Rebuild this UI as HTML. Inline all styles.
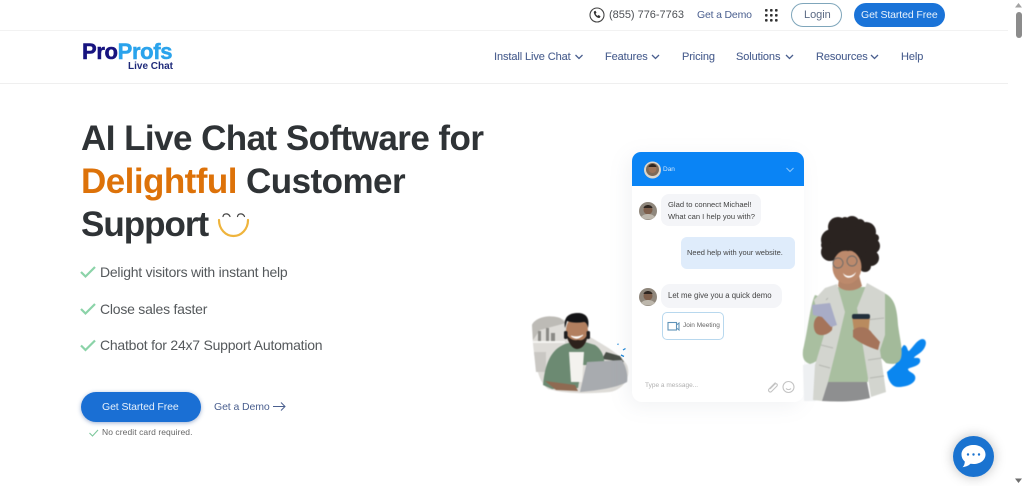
<!DOCTYPE html>
<html><head><meta charset="utf-8"><style>
html,body{margin:0;padding:0;background:#fff;overflow:hidden}
body{width:1024px;height:486px;position:relative;font-family:"Liberation Sans",sans-serif}
.t{position:absolute;white-space:nowrap;line-height:1}
svg{position:absolute}
.n{color:#4a5f8f;font-size:11px;top:51.500px;letter-spacing:-.1px;-webkit-text-stroke:.1px #4a5f8f}
h1{position:absolute;margin:0;left:81px;white-space:nowrap;font-size:35px;font-weight:700;color:#2f3336;line-height:1;letter-spacing:-.55px}
.li{color:#55595c;font-size:14px;letter-spacing:-.23px}
</style></head><body>
<div style="position:absolute;left:0;top:30px;width:1008px;height:1px;background:#f2f2f2"></div>
<div style="position:absolute;left:0;top:83px;width:1008px;height:1px;background:#efefef"></div>

<!-- top bar -->
<svg style="left:589px;top:7px" width="16" height="16" viewBox="0 0 16 16"><circle cx="8" cy="8" r="7" fill="none" stroke="#444" stroke-width="1.100"/><path d="M5.200 4.200l1.300-.4 1 2-.9.8c.4 1 1.100 1.800 2.100 2.300l.9-.9 1.900 1.200-.5 1.300c-.3.5-1 .6-1.600.4C7.200 10.200 5.600 8.500 4.900 6c-.2-.7-.1-1.400.3-1.800z" fill="#333"/></svg>
<div class="t" style="left:609px;top:10px;font-size:11px;color:#4d5055;letter-spacing:-.02px">(855) 776-7763</div>
<div class="t" style="left:697px;top:10px;font-size:10.500px;color:#4a5f8f;letter-spacing:-.18px">Get a Demo</div>
<svg style="left:765px;top:9px" width="13" height="13" viewBox="0 0 13 13" fill="#333"><rect x="0" y="0" width="2.600" height="2.600" rx=".8"/><rect x="5" y="0" width="2.600" height="2.600" rx=".8"/><rect x="10" y="0" width="2.600" height="2.600" rx=".8"/><rect x="0" y="5" width="2.600" height="2.600" rx=".8"/><rect x="5" y="5" width="2.600" height="2.600" rx=".8"/><rect x="10" y="5" width="2.600" height="2.600" rx=".8"/><rect x="0" y="10" width="2.600" height="2.600" rx=".8"/><rect x="5" y="10" width="2.600" height="2.600" rx=".8"/><rect x="10" y="10" width="2.600" height="2.600" rx=".8"/></svg>
<div style="position:absolute;left:791px;top:3px;width:49px;height:22px;border:1px solid #7fa6bb;border-radius:12px"></div>
<div class="t" style="left:804px;top:10px;font-size:11px;color:#5c6b85;letter-spacing:-.05px">Login</div>
<div style="position:absolute;left:854px;top:3px;width:91px;height:24px;background:#1a73d8;border-radius:12px"></div>
<div class="t" style="left:861px;top:10px;font-size:10.500px;color:#e8f2fc;letter-spacing:-.1px">Get Started Free</div>

<!-- scrollbar -->
<div style="position:absolute;left:1008px;top:0;width:16px;height:486px;background:#fff"></div>
<svg style="left:1008px;top:0" width="16" height="486"><path d="M10.500 3l3.500 4.500H7z" fill="#a3a3a3"/><rect x="8" y="12" width="6" height="26" rx="3" fill="#8c8c8c"/><path d="M10.500 483l3.500-4.500H7z" fill="#6e6e6e"/></svg>

<!-- logo -->
<div class="t" style="left:82px;top:40.500px;font-size:22px;font-weight:700;letter-spacing:-.35px;color:#17137f;-webkit-text-stroke:.5px #17137f">Pro<span style="color:#2aa3ec;-webkit-text-stroke:.5px #2aa3ec">Profs</span></div>
<div class="t" style="left:128px;top:61.500px;font-size:10px;font-weight:700;color:#1f2a7a">Live Chat</div>

<!-- nav -->
<div class="t n" style="left:494px">Install Live Chat</div>
<div class="t n" style="left:605px">Features</div>
<div class="t n" style="left:682px">Pricing</div>
<div class="t n" style="left:736px">Solutions</div>
<div class="t n" style="left:816px">Resources</div>
<div class="t n" style="left:901px">Help</div>
<svg style="left:0;top:0" width="1008" height="84" fill="none" stroke="#4a5f8f" stroke-width="1.300"><path d="M575.500 55l3.500 3.500 3.500-3.500M652 55l3.500 3.500 3.500-3.500M786 55l3.500 3.500 3.500-3.500M871 55l3.500 3.500 3.500-3.500"/></svg>

<!-- hero -->
<h1 style="top:121px">AI Live Chat Software for</h1>
<h1 style="top:164px"><span style="color:#dd7209">Delightful</span> Customer</h1>
<h1 style="top:207px;letter-spacing:-1px">Support</h1>
<svg style="left:217px;top:210px" width="34" height="30" viewBox="0 0 34 30" fill="none" stroke="#efb43c" stroke-width="2.200" stroke-linecap="round"><path d="M2 10c0 9 6.500 16 14.500 16S31 19 31 10"/><path d="M6 6.500c.7-3.500 5.500-3.500 7 0M20.500 6.500c.7-3.500 5.500-3.500 7 0" stroke="#444" stroke-width="1.200"/></svg>

<svg style="left:0;top:0" width="110" height="360" fill="none" stroke="#8bd3a8" stroke-width="2.200"><path d="M81 272l4.500 4.500L95 267M81 309l4.500 4.500L95 304M81 345.500l4.500 4.500L95 340.500"/></svg>
<div class="t li" style="left:100px;top:265px">Delight visitors with instant help</div>
<div class="t li" style="left:100px;top:301.500px">Close sales faster</div>
<div class="t li" style="left:100px;top:338px">Chatbot for 24x7 Support Automation</div>

<div style="position:absolute;left:81px;top:392px;width:120px;height:30px;background:#1a6fd4;border-radius:15px;box-shadow:0 1px 4px rgba(40,80,150,.45)"></div>
<div class="t" style="left:102px;top:402px;font-size:10.500px;color:#e6f0fb;letter-spacing:-.1px">Get Started Free</div>
<div class="t" style="left:214px;top:401.500px;font-size:10.500px;color:#4a5f8f;letter-spacing:-.1px">Get a Demo</div>
<svg style="left:273px;top:401px" width="13" height="11" fill="none" stroke="#4a5f8f" stroke-width="1"><path d="M0 5.500h12M8 1.500l4 4-4 4"/></svg>
<svg style="left:89px;top:429px" width="10" height="8" fill="none" stroke="#7cc79b" stroke-width="1.100"><path d="M.5 4l3 3L9 1"/></svg>
<div class="t" style="left:102px;top:428px;font-size:8.500px;color:#666;letter-spacing:.07px">No credit card required.</div>

<!-- man -->
<svg style="left:0;top:0;filter:blur(.5px)" width="1024" height="486">
<path d="M532 325C535 318 548 314 560 318C570 322 580 330 590 337C600 343 620 353 627 365C632 378 622 390 610 392C590 394 565 394 548 389C538 382 533 360 532 325Z" fill="#dedcd8"/>
<path d="M532 325C535 318 548 314 560 318L566 323 540 330 533 340Z" fill="#bdbbb6"/>
<rect x="533" y="341" width="32" height="2" fill="#f5f4f1"/>
<path d="M538 331h3v10h-3zM546 328h3v13h-3zM551 333h4v8h-4z" fill="#8b8a86"/>
<path d="M534 352h12v20h-10z" fill="#c9c7c3"/>
<path d="M606 352l14 4 4 6-22-3z" fill="#4a5048"/>
<path d="M543 385C545 365 550 350 565 344L572 342H585L595 345C603 350 605 360 604 365L582 365L578 388L552 389Z" fill="#6c8a72"/>
<path d="M569 352L584 352L582 382H571Z" fill="#f3f2ee"/>
<path d="M587 362L622 360C627 368 628 378 627 382C615 388 600 390 580 392Z" fill="#a8abaf"/>
<path d="M545 381L575 385L578 391L556 390Z" fill="#8f6a52"/>
<ellipse cx="577" cy="331" rx="11" ry="15" fill="#b27f5f"/>
<path d="M565 328C563 316 570 313 578 313C586 313 590 318 588 328C587 324 586 322 584 322C578 323 572 323 567 321Z" fill="#141416"/>
<path d="M566 334C568 342 572 349 577 349C583 349 587 342 588 334C585 338 584 341 578 340C572 341 569 338 566 334Z" fill="#2d221c"/>
<path d="M571 336Q577 341 583 335Q578 338 571 336Z" fill="#fff" stroke="#fff" stroke-width=".8"/>
<rect x="564" y="331" width="3.500" height="8" rx="1.500" fill="#1d1d1f"/><rect x="586.500" y="331" width="3.500" height="8" rx="1.500" fill="#1d1d1f"/>
</svg>
<svg style="left:0;top:0" width="1024" height="486"><path d="M617.500 344l1 .5M623 350l2.500-1.500M621 355l3 1.500" stroke="#1c86d8" stroke-width="1.300" fill="none"/></svg>

<!-- chat card -->
<div style="position:absolute;left:632px;top:152px;width:172px;height:250px;background:#fff;border-radius:10px;box-shadow:-4px 4px 20px rgba(120,130,150,.10)"></div>
<div style="position:absolute;left:632px;top:152px;width:172px;height:34px;background:#0a84f5;border-radius:9px 9px 0 0"></div>
<svg style="left:640px;top:158px" width="170" height="22"><circle cx="12.500" cy="12" r="8.500" fill="#dcd6cb"/><circle cx="12.500" cy="11.500" r="6.500" fill="#7d6a58"/><circle cx="12.500" cy="11" r="4" fill="#9b7358"/><path d="M8.500 9c1-4 7-4 8 0z" fill="#2f2620"/><path d="M146.500 10l3.500 3.500 3.500-3.500" fill="none" stroke="#8cc6fb" stroke-width="1"/></svg>
<div class="t" style="left:663px;top:167px;font-size:6.500px;color:#cfe6fc">Dan</div>

<div style="position:absolute;left:661px;top:194px;width:100px;height:32px;background:#f4f5f8;border-radius:8px"></div>
<div class="t" style="left:668px;top:200.500px;font-size:7.600px;color:#444">Glad to connect Michael!</div>
<div class="t" style="left:668px;top:212.500px;font-size:7.600px;color:#444">What can I help you with?</div>
<svg style="left:638px;top:201px" width="20" height="20"><circle cx="10" cy="10" r="9" fill="#8f877c"/><circle cx="10" cy="9" r="4.500" fill="#7e5f4b"/><path d="M5.500 7c1-4 8-4 9 0z" fill="#2f2620"/><path d="M3 16c3-4 11-4 14 0-3 3-11 3-14 0z" fill="#bdb7ac"/></svg>

<div style="position:absolute;left:681px;top:237px;width:114px;height:32px;background:#dfecfb;border-radius:6px"></div>
<div class="t" style="left:687px;top:249px;font-size:7.500px;color:#444">Need help with your website.</div>

<div style="position:absolute;left:661px;top:284px;width:121px;height:24px;background:#f4f5f8;border-radius:9px"></div>
<div class="t" style="left:668px;top:291.500px;font-size:7.800px;color:#444">Let me give you a quick demo</div>
<svg style="left:638px;top:287px" width="20" height="20"><circle cx="10" cy="10" r="9" fill="#8f877c"/><circle cx="10" cy="9" r="4.500" fill="#7e5f4b"/><path d="M5.500 7c1-4 8-4 9 0z" fill="#2f2620"/><path d="M3 16c3-4 11-4 14 0-3 3-11 3-14 0z" fill="#bdb7ac"/></svg>

<div style="position:absolute;left:662px;top:312px;width:60px;height:26px;border:1px solid #b8d8ee;border-radius:5px"></div>
<svg style="left:667px;top:321px" width="14" height="11" fill="none" stroke="#5f93b8" stroke-width="1.100"><rect x="1" y="1.500" width="8.500" height="7.500"/><path d="M9.500 4l2.500-2v7l-2.500-2"/></svg>
<div class="t" style="left:683px;top:322.500px;font-size:6.500px;color:#666">Join Meeting</div>

<div class="t" style="left:645px;top:383px;font-size:6.500px;color:#b0b0b0">Type a message...</div>
<svg style="left:766px;top:380px" width="30" height="14" fill="none" stroke="#c4c4c4" stroke-width="1.100"><path d="M9.500 2.500L3 9c-1.500 2 1 4 2.500 2.500L11 6c1-1.500-.5-3-2-2L4 9"/><circle cx="22.500" cy="7" r="5.500"/><path d="M20 8.500c1.500 1.500 3.500 1.500 5 0"/></svg>

<!-- woman -->
<svg style="left:0;top:0;filter:blur(.5px)" width="1024" height="486">
<path d="M887 372L895 365C899 360 900 348 904 345C908 346 907 351 909 351C913 347 917 340 922 339C927 339 927 345 923 350C920 354 914 356 914 358C917 358 921 357 920 362C918 367 910 367 908 369C908 372 913 372 915 376C917 382 909 387 898 387C892 387 888 381 887 372Z" fill="#0a86ef"/>
<path d="M803 365L817 362L816 401H804Z" fill="#eef0f2"/>
<path d="M815 295C810 305 808 330 803 350C802 358 804 362 810 364C818 362 824 355 830 345L830 300Z" fill="#a9bfa0"/>
<path d="M884 293C893 297 897 305 898 325C900 340 903 350 901 358C899 364 893 365 886 363L872 348L880 330Z" fill="#a3ba9a"/>
<path d="M838 287H868L868 382H828L830 320Z" fill="#a9bfa0"/>
<path d="M825 288L837 284L845 312L836 350L828 382L822 401L813 400L815 365L824 335L814 300Z" fill="#d3d5cf"/>
<path d="M867 283L885 293L885 335L880 350L886 392L871 397L863 347L857 308Z" fill="#d3d5cf"/>
<path d="M826 300l2-2M821 345l12 3M819 365l11 3M866 320l18-2M868 360l14-2M870 378l14-2" stroke="#b5b7b1" stroke-width="1" fill="none"/>
<path d="M828 382H867L870 398C855 402 838 402 822 401Z" fill="#8e8f90"/>
<g fill="#2a2320">
<circle cx="850" cy="243" r="24"/><circle cx="832" cy="240" r="11"/><circle cx="830" cy="252" r="9"/><circle cx="838" cy="227" r="10"/><circle cx="852" cy="224" r="8"/><circle cx="866" cy="232" r="10"/><circle cx="872" cy="246" r="8"/><circle cx="871" cy="258" r="8"/><circle cx="865" cy="266" r="6"/><circle cx="826" cy="245" r="5"/><circle cx="845" cy="221" r="4"/><circle cx="860" cy="224" r="5"/><circle cx="875" cy="238" r="4"/>
</g>
<path d="M840 272L858 272L862 286C855 292 843 292 838 286Z" fill="#b38468"/>
<ellipse cx="847" cy="267" rx="14.500" ry="17" fill="#bd8a6c"/>
<path d="M832 260C835 252 842 250 848 251C854 250 859 252 862 258C862 250 852 246 845 247C838 247 831 252 832 260Z" fill="#2a2320"/>
<circle cx="838" cy="263" r="5" fill="none" stroke="#6b6a68" stroke-width=".9"/><circle cx="852" cy="261" r="5" fill="none" stroke="#6b6a68" stroke-width=".9"/>
<path d="M843 273C846 277 852 277 856 272C854 279 845 280 843 273Z" fill="#fff"/>
<path d="M816 318C822 312 830 316 833 320L832 330C828 335 820 337 816 333C813 329 813 322 816 318Z" fill="#a5745a"/>
<path d="M812 305L830 303L837 325L831 327L822 317L813 315Z" fill="#a8acc6"/>
<path d="M852 316H870L868 338H855Z" fill="#b98b5f"/>
<rect x="852" y="314" width="18" height="5" rx="2" fill="#22303c"/>
<path d="M853 330C860 325 868 327 872 333L880 342L878 350C868 347 858 342 853 337Z" fill="#a5745a"/>
</svg>

<!-- chat bubble -->
<div style="position:absolute;left:953px;top:436px;width:41px;height:41px;background:#1a73d0;border-radius:50%;box-shadow:0 0 12px rgba(0,0,0,.25)"></div>
<svg style="left:960px;top:444px" width="27" height="26" viewBox="0 0 27 26"><path d="M13.500 1c7 0 12 4 12 9.500s-5 9.500-12 9.500c-1 0-2 0-3-.2-2 2-5 3-8 3.500 1.500-1.500 2.300-3.500 2.300-5.800C2.500 15.500 1.500 13 1.500 10.500 1.500 5 6.500 1 13.500 1z" fill="#fff"/><circle cx="8" cy="10.500" r="1.200" fill="#1a73d0"/><circle cx="13.500" cy="10.500" r="1.200" fill="#1a73d0"/><circle cx="19" cy="10.500" r="1.200" fill="#1a73d0"/></svg>
</body></html>
